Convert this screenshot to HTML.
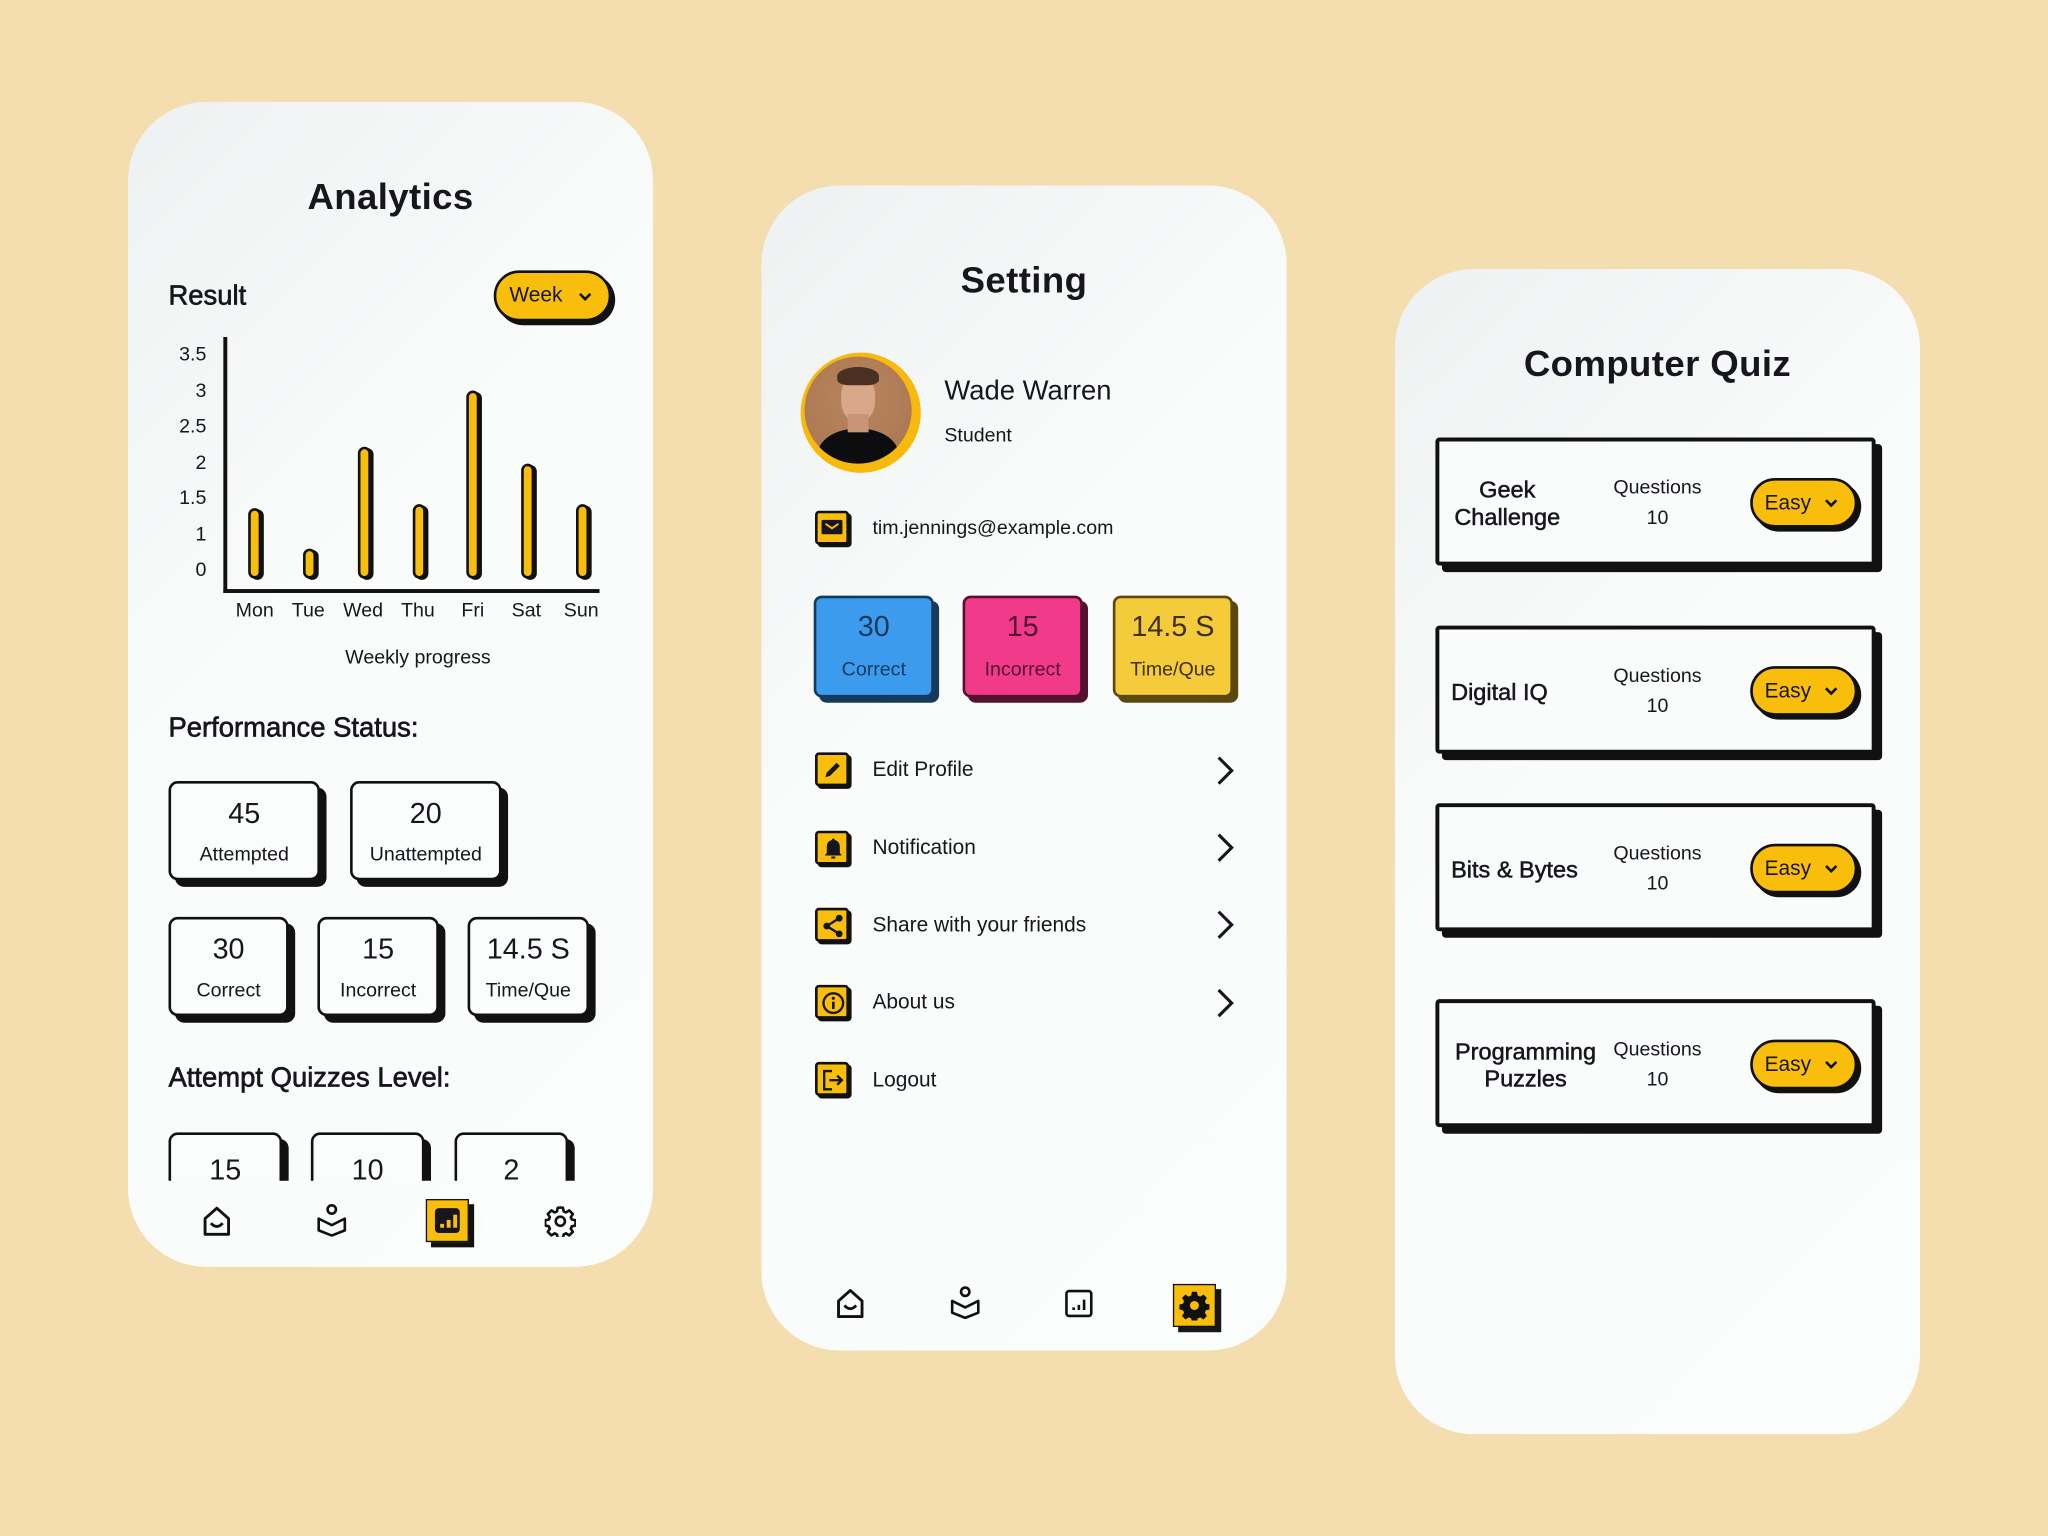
<!DOCTYPE html>
<html><head><meta charset="utf-8">
<style>
*{margin:0;padding:0;box-sizing:border-box}
html,body{width:2048px;height:1536px;overflow:hidden;background:#f4ddae}
#w{position:absolute;left:0;top:0;width:1568px;height:1176px;transform:scale(1.306122);transform-origin:0 0;font-family:"Liberation Sans",sans-serif;color:#16161c}
.a{position:absolute}
.card{position:absolute;width:402px;height:892px;border-radius:60px;background:linear-gradient(135deg,#eef1f1 0%,#f9fcfb 40%,#fafdfc 100%)}
.c{text-align:center}
.t{font-size:28px;font-weight:700;letter-spacing:0.3px}
.h{font-size:21px;-webkit-text-stroke:0.5px #16161c}
.bar{position:absolute;width:10px;background:#f9bd0b;border:2px solid #111;border-radius:6px;box-shadow:2px 1px 0 #111}
.yl{position:absolute;width:30px;text-align:right;font-size:15px;left:128px}
.dl{position:absolute;font-size:15px;top:458px;width:40px;text-align:center}
.box{position:absolute;border:2.5px solid #111;border-radius:7px;background:#fbfdfc;box-shadow:5px 5px 0 #111;text-align:center}
.box b{display:block;font-weight:400;font-size:22px;margin-top:10px}
.box span{display:block;font-size:15px;margin-top:10px}
.pill{position:absolute;background:#f9bd0b;border:2.5px solid #111;border-radius:20px;box-shadow:3px 3px 0 #111;font-size:16px}
.sbox{position:absolute;width:92px;height:78px;border-radius:6px;border:2px solid;text-align:center}
.sbox b{display:block;font-weight:400;font-size:22px;margin-top:9px}
.sbox span{display:block;font-size:15px;margin-top:11px}
.mi{position:absolute;left:624px;width:26px;height:26px;background:#f9bd0b;border:2px solid #111;border-radius:3px;box-shadow:2px 2px 0 #111}
.mt{position:absolute;left:668px;font-size:16px}
.qc{position:absolute;left:1099px;width:337px;height:98px;border:3px solid #111;border-radius:3px;background:#fafcfc;box-shadow:5px 5px 0 #111}
.qt{position:absolute;left:9px;font-size:18px;line-height:21px;-webkit-text-stroke:0.4px #16161c}
.qq{position:absolute;left:122px;width:90px;text-align:center;font-size:15px;line-height:23px}
</style></head><body><div id="w">

<!-- Card 1 Analytics -->
<div class="card" style="left:98px;top:78px"></div>
<div class="a c t" style="left:98px;width:402px;top:135px">Analytics</div>
<div class="a h" style="left:129px;top:215px">Result</div>
<div class="pill" style="left:378px;top:207px;width:90px;height:39px"><span class="a" style="left:10px;top:9px">Week</span>
<svg class="a" style="left:62px;top:13px" width="12" height="10" viewBox="0 0 12 10"><path d="M2 3l4 4 4-4" fill="none" stroke="#111" stroke-width="2"/></svg></div>
<div class="a" style="left:171px;top:258px;width:2.5px;height:196px;background:#111"></div>
<div class="a" style="left:171px;top:451px;width:288px;height:2.5px;background:#111"></div>
<div class="yl" style="top:263px">3.5</div><div class="yl" style="top:291px">3</div><div class="yl" style="top:318px">2.5</div><div class="yl" style="top:346px">2</div><div class="yl" style="top:373px">1.5</div><div class="yl" style="top:401px">1</div><div class="yl" style="top:428px">0</div>
<div class="bar" style="left:190px;top:389px;height:54px"></div>
<div class="bar" style="left:232px;top:420px;height:23px"></div>
<div class="bar" style="left:274px;top:342px;height:101px"></div>
<div class="bar" style="left:316px;top:386px;height:57px"></div>
<div class="bar" style="left:357px;top:299px;height:144px"></div>
<div class="bar" style="left:399px;top:355px;height:88px"></div>
<div class="bar" style="left:441px;top:386px;height:57px"></div>
<div class="dl" style="left:175px;top:459px">Mon</div><div class="dl" style="left:216px;top:459px">Tue</div><div class="dl" style="left:258px;top:459px">Wed</div><div class="dl" style="left:300px;top:459px">Thu</div><div class="dl" style="left:342px;top:459px">Fri</div><div class="dl" style="left:383px;top:459px">Sat</div><div class="dl" style="left:425px;top:459px">Sun</div>
<div class="a c" style="left:220px;width:200px;top:495px;font-size:15px">Weekly progress</div>
<div class="a h" style="left:129px;top:546px">Performance Status:</div>
<div class="box" style="left:129px;top:598px;width:116px;height:76px"><b>45</b><span>Attempted</span></div>
<div class="box" style="left:268px;top:598px;width:116px;height:76px"><b>20</b><span>Unattempted</span></div>
<div class="box" style="left:129px;top:702px;width:92px;height:76px"><b>30</b><span>Correct</span></div>
<div class="box" style="left:243px;top:702px;width:93px;height:76px"><b>15</b><span>Incorrect</span></div>
<div class="box" style="left:358px;top:702px;width:93px;height:76px"><b>14.5 S</b><span>Time/Que</span></div>
<div class="a h" style="left:129px;top:814px">Attempt Quizzes Level:</div>
<div class="a" style="left:120px;top:860px;width:340px;height:44px;overflow:hidden">
<div class="box" style="left:9px;top:7px;width:87px;height:70px"><b style="margin-top:14px">15</b></div>
<div class="box" style="left:118px;top:7px;width:87px;height:70px"><b style="margin-top:14px">10</b></div>
<div class="box" style="left:228px;top:7px;width:87px;height:70px"><b style="margin-top:14px">2</b></div>
</div>
<!-- nav 1 -->
<svg class="a" style="left:155px;top:923px" width="22" height="24" viewBox="0 0 22 24"><path d="M2 10L11 2l9 8v12H2z" fill="none" stroke="#111" stroke-width="2.2" stroke-linejoin="round"/><path d="M6.5 13.5q4.5 5 9 0" fill="none" stroke="#111" stroke-width="2.2"/></svg>
<svg class="a" style="left:242px;top:921px" width="24" height="26" viewBox="0 0 24 26"><circle cx="12" cy="5" r="3.2" fill="none" stroke="#111" stroke-width="2"/><path d="M2 12l10 5 10-5v9l-10 4-10-4z" fill="none" stroke="#111" stroke-width="2" stroke-linejoin="round"/></svg>
<div class="a" style="left:326px;top:918px;width:33px;height:33px;background:#f9bd0b;border:1.5px solid #111;box-shadow:4px 4px 0 #111"><div class="a" style="left:6px;top:6px;width:19px;height:19px;background:#16161c;border-radius:3px"></div>
<div class="a" style="left:10px;top:18px;width:3px;height:3px;background:#f9bd0b"></div><div class="a" style="left:15px;top:15px;width:3px;height:6px;background:#f9bd0b"></div><div class="a" style="left:20px;top:11px;width:3px;height:10px;background:#f9bd0b"></div></div>
<svg class="a" style="left:417px;top:923px" width="24" height="24" viewBox="0 0 24 24"><path d="M12 1.5l2 .2.6 2.8 1.8.8 2.4-1.6 2.8 2.8-1.6 2.4.8 1.8 2.8.6v4l-2.8.6-.8 1.8 1.6 2.4-2.8 2.8-2.4-1.6-1.8.8-.6 2.8h-4l-.6-2.8-1.8-.8-2.4 1.6-2.8-2.8 1.6-2.4-.8-1.8-2.8-.6v-4l2.8-.6.8-1.8-1.6-2.4 2.8-2.8 2.4 1.6 1.8-.8.6-2.8z" fill="none" stroke="#111" stroke-width="2" stroke-linejoin="round"/><circle cx="12" cy="12" r="3.5" fill="none" stroke="#111" stroke-width="2"/></svg>

<!-- Card 2 Setting -->
<div class="card" style="left:583px;top:142px"></div>
<div class="a c t" style="left:583px;width:402px;top:199px">Setting</div>
<div class="a" style="left:613px;top:270px;width:92px;height:92px;border-radius:50%;background:#f6b90c"></div>
<div class="a" style="left:616px;top:273px;width:82px;height:82px;border-radius:50%;overflow:hidden;background:radial-gradient(circle at 50% 40%,#b88560,#a8754f)">
<div class="a" style="left:10px;top:55px;width:62px;height:40px;border-radius:50% 50% 0 0;background:#0d0d0f"></div>
<div class="a" style="left:28px;top:14px;width:26px;height:36px;border-radius:45%;background:#d9a88a"></div>
<div class="a" style="left:25px;top:8px;width:32px;height:14px;border-radius:50% 50% 30% 30%;background:#4a3020"></div>
<div class="a" style="left:33px;top:44px;width:16px;height:14px;background:#c8957a"></div>
</div>
<div class="a" style="left:723px;top:288px;font-size:21px">Wade Warren</div>
<div class="a" style="left:723px;top:325px;font-size:15px">Student</div>
<div class="a" style="left:624px;top:391px;width:26px;height:26px;background:#f9bd0b;border:2px solid #111;border-radius:3px;box-shadow:2px 2px 0 #111"><div class="a" style="left:3px;top:5px;width:16px;height:11px;background:#16161c;border-radius:1px"></div><svg class="a" style="left:3px;top:5px" width="16" height="11"><path d="M3 3l5 3.5 5-3.5" fill="none" stroke="#f9bd0b" stroke-width="1.5"/></svg></div>
<div class="a" style="left:668px;top:396px;font-size:15px">tim.jennings@example.com</div>
<div class="sbox" style="left:623px;top:456px;background:#3d9bee;border-color:#153a5c;box-shadow:4px 4px 0 #153a5c;color:#153a5c"><b>30</b><span>Correct</span></div>
<div class="sbox" style="left:737px;top:456px;background:#f13a8a;border-color:#54122f;box-shadow:4px 4px 0 #54122f;color:#54122f"><b>15</b><span>Incorrect</span></div>
<div class="sbox" style="left:852px;top:456px;background:#f4cb3a;border-color:#5b4710;box-shadow:4px 4px 0 #5b4710;color:#3e3008"><b>14.5 S</b><span>Time/Que</span></div>

<div class="mi" style="top:576px"><svg class="a" style="left:3px;top:3px" width="17" height="17" viewBox="0 0 17 17"><path d="M3 14l1-3.5 7.5-7.5 2.5 2.5L6.5 13z" fill="#16161c"/></svg></div>
<div class="mt" style="top:581px">Edit Profile</div>
<div class="mi" style="top:636px"><svg class="a" style="left:3px;top:2px" width="18" height="19" viewBox="0 0 18 19"><path d="M9 2a1 1 0 011 1 5 5 0 014 5v5l1.5 2h-13L4 13V8a5 5 0 014-5 1 1 0 011-1z" fill="#16161c"/><path d="M7.5 16.5h3" stroke="#16161c" stroke-width="1.5"/></svg></div>
<div class="mt" style="top:641px">Notification</div>
<div class="mi" style="top:695px"><svg class="a" style="left:2px;top:2px" width="20" height="20" viewBox="0 0 20 20"><path d="M14.5 4L5 10l9.5 6" fill="none" stroke="#16161c" stroke-width="1.8"/><circle cx="14.5" cy="4" r="2.6" fill="#16161c"/><circle cx="5" cy="10" r="2.6" fill="#16161c"/><circle cx="14.5" cy="16" r="2.6" fill="#16161c"/></svg></div>
<div class="mt" style="top:700px">Share with your friends</div>
<div class="mi" style="top:754px"><svg class="a" style="left:2px;top:2px" width="20" height="20" viewBox="0 0 20 20"><circle cx="10" cy="10" r="7.5" fill="none" stroke="#16161c" stroke-width="1.8"/><path d="M10 9v5.5" stroke="#16161c" stroke-width="2"/><circle cx="10" cy="6.3" r="1.2" fill="#16161c"/></svg></div>
<div class="mt" style="top:759px">About us</div>
<div class="mi" style="top:813px"><svg class="a" style="left:2px;top:2px" width="20" height="20" viewBox="0 0 20 20"><path d="M9 3H3v14h6" fill="none" stroke="#16161c" stroke-width="1.8"/><path d="M7 10h9M13 6.5l3.5 3.5-3.5 3.5" fill="none" stroke="#16161c" stroke-width="1.8"/></svg></div>
<div class="mt" style="top:819px">Logout</div>
<svg class="a" style="left:930px;top:578px" width="16" height="24" viewBox="0 0 16 24"><path d="M3 2l10 10L3 22" fill="none" stroke="#16161c" stroke-width="2.4"/></svg>
<svg class="a" style="left:930px;top:637px" width="16" height="24" viewBox="0 0 16 24"><path d="M3 2l10 10L3 22" fill="none" stroke="#16161c" stroke-width="2.4"/></svg>
<svg class="a" style="left:930px;top:696px" width="16" height="24" viewBox="0 0 16 24"><path d="M3 2l10 10L3 22" fill="none" stroke="#16161c" stroke-width="2.4"/></svg>
<svg class="a" style="left:930px;top:756px" width="16" height="24" viewBox="0 0 16 24"><path d="M3 2l10 10L3 22" fill="none" stroke="#16161c" stroke-width="2.4"/></svg>
<!-- nav 2 -->
<svg class="a" style="left:640px;top:986px" width="22" height="24" viewBox="0 0 22 24"><path d="M2 10L11 2l9 8v12H2z" fill="none" stroke="#111" stroke-width="2.2" stroke-linejoin="round"/><path d="M6.5 13.5q4.5 5 9 0" fill="none" stroke="#111" stroke-width="2.2"/></svg>
<svg class="a" style="left:727px;top:984px" width="24" height="26" viewBox="0 0 24 26"><circle cx="12" cy="5" r="3.2" fill="none" stroke="#111" stroke-width="2"/><path d="M2 12l10 5 10-5v9l-10 4-10-4z" fill="none" stroke="#111" stroke-width="2" stroke-linejoin="round"/></svg>
<svg class="a" style="left:815px;top:987px" width="22" height="22" viewBox="0 0 22 22"><rect x="1.5" y="1.5" width="19" height="19" rx="2" fill="none" stroke="#111" stroke-width="2"/><path d="M7 14v2M11 12v4M15 8v8" stroke="#111" stroke-width="2"/></svg>
<div class="a" style="left:898px;top:983px;width:33px;height:33px;background:#f9bd0b;border:1.5px solid #111;box-shadow:4px 4px 0 #16161c">
<svg class="a" style="left:4px;top:4px" width="23" height="23" viewBox="0 0 24 24"><path d="M10 1h4l.6 3 2 .9 2.6-1.7 2.8 2.8-1.7 2.6.9 2 3 .6v4l-3 .6-.9 2 1.7 2.6-2.8 2.8-2.6-1.7-2 .9-.6 3h-4l-.6-3-2-.9-2.6 1.7-2.8-2.8 1.7-2.6-.9-2-3-.6v-4l3-.6.9-2-1.7-2.6 2.8-2.8 2.6 1.7 2-.9z" fill="#111"/><circle cx="12" cy="12" r="3.6" fill="#f9bd0b"/></svg></div>

<!-- Card 3 Quiz -->
<div class="card" style="left:1068px;top:206px"></div>
<div class="a c t" style="left:1068px;width:402px;top:263px">Computer Quiz</div>

<div class="qc" style="top:335px"><div class="qt" style="top:27px;text-align:center;width:86px">Geek<br>Challenge</div><div class="qq" style="top:24px">Questions<br>10</div>
<div class="pill" style="left:238px;top:28px;width:82px;height:38px"><span class="a" style="left:9px;top:9px">Easy</span><svg class="a" style="left:54px;top:12px" width="12" height="10" viewBox="0 0 12 10"><path d="M2 3l4 4 4-4" fill="none" stroke="#111" stroke-width="2"/></svg></div></div>

<div class="qc" style="top:479px"><div class="qt" style="top:38px">Digital IQ</div><div class="qq" style="top:24px">Questions<br>10</div>
<div class="pill" style="left:238px;top:28px;width:82px;height:38px"><span class="a" style="left:9px;top:9px">Easy</span><svg class="a" style="left:54px;top:12px" width="12" height="10" viewBox="0 0 12 10"><path d="M2 3l4 4 4-4" fill="none" stroke="#111" stroke-width="2"/></svg></div></div>

<div class="qc" style="top:615px"><div class="qt" style="top:38px">Bits &amp; Bytes</div><div class="qq" style="top:24px">Questions<br>10</div>
<div class="pill" style="left:238px;top:28px;width:82px;height:38px"><span class="a" style="left:9px;top:9px">Easy</span><svg class="a" style="left:54px;top:12px" width="12" height="10" viewBox="0 0 12 10"><path d="M2 3l4 4 4-4" fill="none" stroke="#111" stroke-width="2"/></svg></div></div>

<div class="qc" style="top:765px"><div class="qt" style="top:27px;text-align:center;width:114px">Programming<br>Puzzles</div><div class="qq" style="top:24px">Questions<br>10</div>
<div class="pill" style="left:238px;top:28px;width:82px;height:38px"><span class="a" style="left:9px;top:9px">Easy</span><svg class="a" style="left:54px;top:12px" width="12" height="10" viewBox="0 0 12 10"><path d="M2 3l4 4 4-4" fill="none" stroke="#111" stroke-width="2"/></svg></div></div>

</div></body></html>
